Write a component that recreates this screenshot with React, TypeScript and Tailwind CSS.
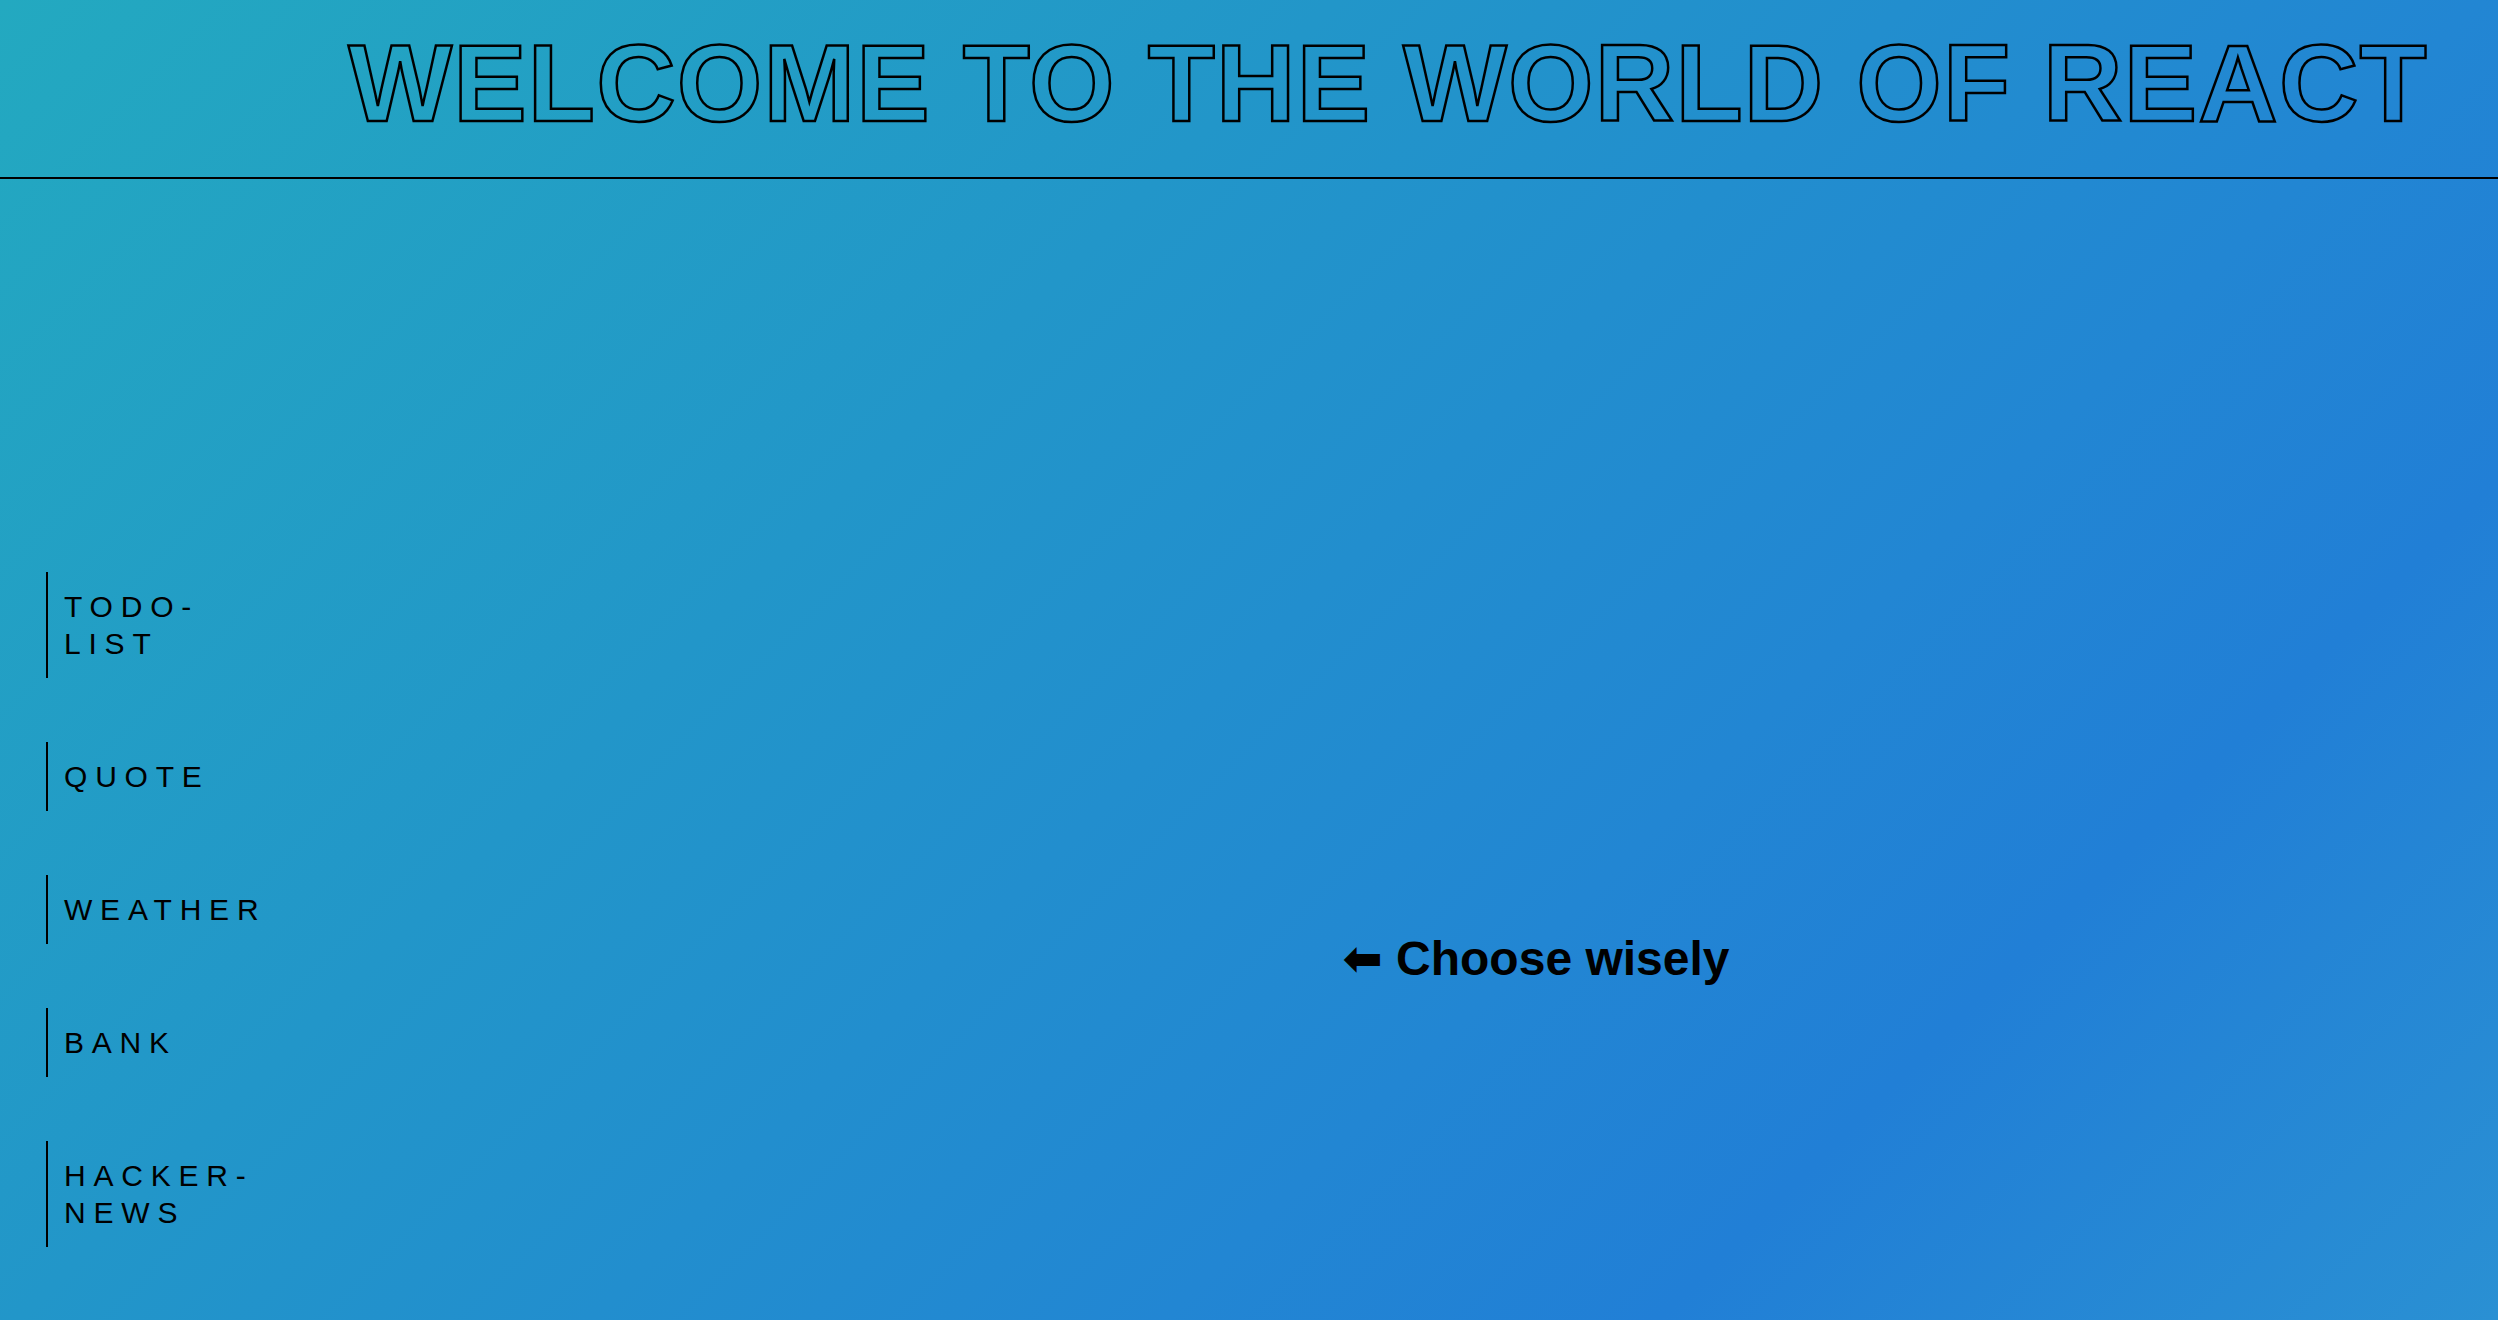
import { FC } from "react";

const links = ["TODO-LIST", "QUOTE", "WEATHER", "BANK", "HACKER-NEWS"];

const NavItem: FC<{ label: string }> = ({ label }) => {
    return (
        <div className="ml-[46px] border-l-2 border-black pl-4 py-4">
            <p className="w-[212px] text-[30px] leading-[37px] tracking-[0.26em] text-black break-words">{label}</p>
        </div>
    );
};

export default function App() {
    return (
        <div
            className="min-h-screen w-full bg-[linear-gradient(135deg,#23a9c0_0%,#2296c9_35%,#2286d3_65%,#217fd6_78%,#2a90d3_100%)] font-['Liberation_Sans',Arial,sans-serif] text-black"
        >
            <header className="border-b-2 border-black pt-[28px] pb-[39px] pr-[70px] text-right">
                <h1 className="text-[110px] leading-[110px] font-bold tracking-[1.2px] text-transparent [-webkit-text-stroke:2.5px_black]">
                    WELCOME TO THE WORLD OF REACT
                </h1>
            </header>
            <div className="flex">
                <nav className="flex flex-col gap-16 pt-[393px]">
                    {links.map((l) => (
                        <NavItem key={l} label={l} />
                    ))}
                </nav>
                <main className="flex flex-1 justify-center pl-[298px] pt-[755px]">
                    <p className="text-5xl leading-[48px] font-bold whitespace-nowrap">
                        <span className="font-['DejaVu_Sans',sans-serif]">⬅</span> Choose wisely
                    </p>
                </main>
            </div>
        </div>
    );
}
